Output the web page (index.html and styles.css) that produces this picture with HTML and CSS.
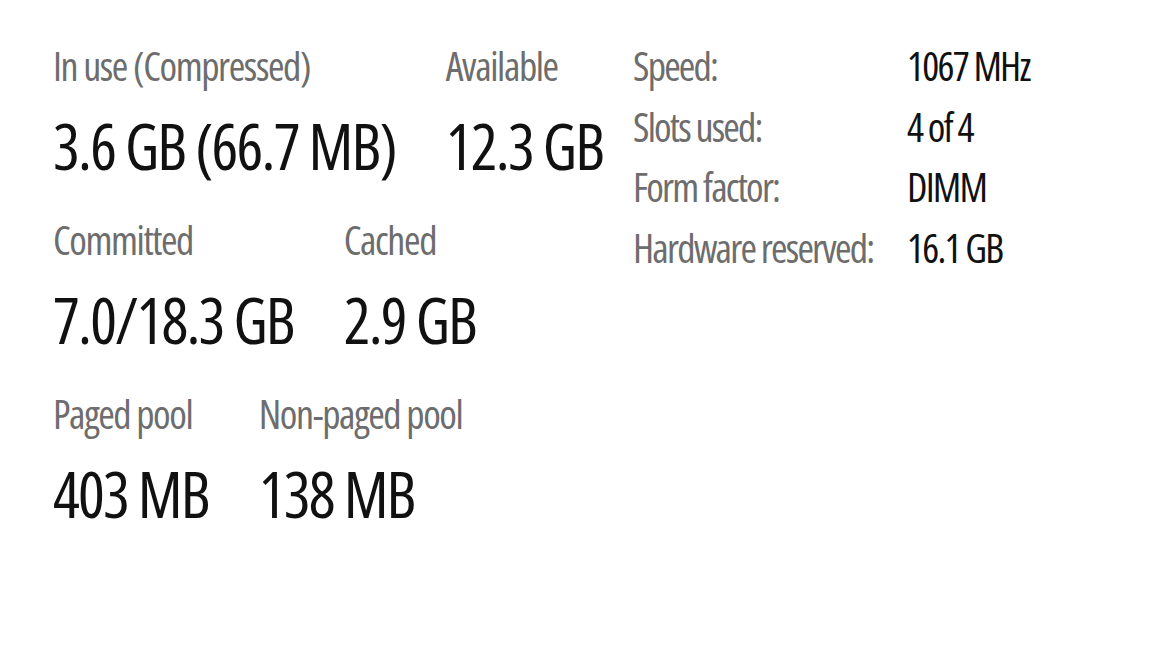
FILE: index.html
```html
<!doctype html>
<html>
  <head>
    <title>Memory</title>
    <meta name="viewport" content="width=device-width, initial-scale=1">
    <link rel="stylesheet" href="styles.css">
  </head>
  <body>
    <div class="memory">
      <div class="stats">
        <div class="stats-row">
          <div class="stat">
            <div class="stat-label">In use (Compressed)</div>
            <div class="stat-value">3.6 GB (66.7 MB)</div>
          </div>
          <div class="stat">
            <div class="stat-label">Available</div>
            <div class="stat-value">12.3 GB</div>
          </div>
        </div>
        <div class="stats-row">
          <div class="stat">
            <div class="stat-label">Committed</div>
            <div class="stat-value">7.0/18.3 GB</div>
          </div>
          <div class="stat">
            <div class="stat-label">Cached</div>
            <div class="stat-value">2.9 GB</div>
          </div>
        </div>
        <div class="stats-row">
          <div class="stat">
            <div class="stat-label">Paged pool</div>
            <div class="stat-value">403 MB</div>
          </div>
          <div class="stat">
            <div class="stat-label">Non-paged pool</div>
            <div class="stat-value">138 MB</div>
          </div>
        </div>
      </div>

      <dl class="details">
        <dt>Speed:</dt>
        <dd>1067 MHz</dd>
        <dt>Slots used:</dt>
        <dd>4 of 4</dd>
        <dt>Form factor:</dt>
        <dd>DIMM</dd>
        <dt>Hardware reserved:</dt>
        <dd>16.1 GB</dd>
      </dl>
    </div>
  </body>
</html>
```
FILE: styles.css
```css
body {
    margin: 0;
    background: #fff;
    font-family: "Open Sans", sans-serif;
    font-stretch: 75%;
}
.memory {
    display: flex;
    align-items: flex-start;
    padding: 46px 0 0 53px;
}
.stats {
    width: 580px;
    display: flex;
    flex-direction: column;
    gap: 43px;
}
.stats-row {
    display: flex;
    gap: 50px;
}
.stat {
    display: flex;
    flex-direction: column;
    gap: 28px;
}
.stat-label {
    font-size: 40px;
    line-height: 40px;
    letter-spacing: -1.4px;
    color: #6d6d6d;
}
.stat-value {
    font-size: 63px;
    line-height: 63px;
    letter-spacing: -1.8px;
    color: #111;
}
.details {
    margin: 0;
    display: grid;
    grid-template-columns: 274px auto;
    row-gap: 20.7px;
    font-size: 40px;
    line-height: 40px;
    letter-spacing: -1.8px;
}
.details dt {
    color: #6d6d6d;
}
.details dd {
    margin: 0;
    color: #111;
}
```
